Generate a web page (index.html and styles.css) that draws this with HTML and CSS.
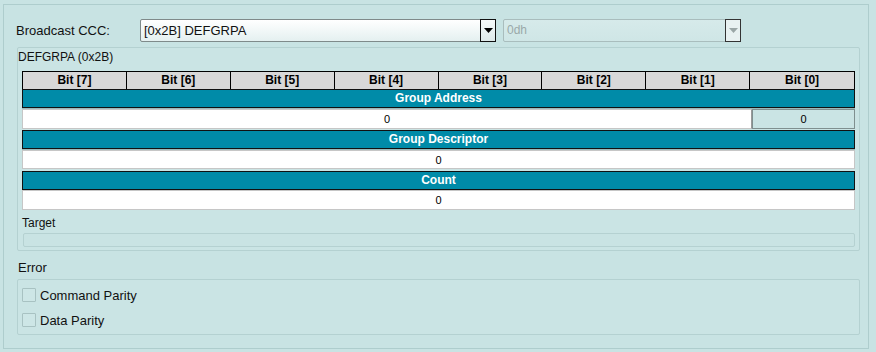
FILE: index.html
```html
<!DOCTYPE html>
<html>
<head>
<meta charset="utf-8">
<link rel="stylesheet" href="styles.css">
</head>
<body>
<div class="panel">
  <div class="toprow">
    <div class="lbl-main">Broadcast CCC:</div>
    <div class="combo combo-main">
      <span class="combo-text">[0x2B] DEFGRPA</span>
      <span class="combo-btn"><svg width="9" height="5" viewBox="0 0 9 5"><path d="M0 0H9L4.5 5Z" fill="#000"/></svg></span>
    </div>
    <div class="combo combo-dis">
      <span class="combo-text">0dh</span>
      <span class="combo-btn"><svg width="9" height="5" viewBox="0 0 9 5"><path d="M0 0H9L4.5 5Z" fill="#9aa6a6"/></svg></span>
    </div>
  </div>

  <div class="group group-reg">
    <div class="group-title">DEFGRPA (0x2B)</div>
    <div class="reg">
      <div class="row hdr">
        <div class="hcell">Bit [7]</div>
        <div class="hcell">Bit [6]</div>
        <div class="hcell">Bit [5]</div>
        <div class="hcell">Bit [4]</div>
        <div class="hcell">Bit [3]</div>
        <div class="hcell">Bit [2]</div>
        <div class="hcell">Bit [1]</div>
        <div class="hcell">Bit [0]</div>
      </div>
      <div class="row field r-ga">Group Address</div>
      <div class="row vals r-v1">
        <div class="vcell span7">0</div>
        <div class="vcell bit0">0</div>
      </div>
      <div class="row field r-gd">Group Descriptor</div>
      <div class="row vals r-v2">
        <div class="vcell span8">0</div>
      </div>
      <div class="row field r-cnt">Count</div>
      <div class="row vals r-v3">
        <div class="vcell span8">0</div>
      </div>
    </div>
    <div class="target-lbl">Target</div>
    <div class="target-bar"></div>
  </div>

  <div class="err-lbl">Error</div>
  <div class="group group-err">
    <label class="chk-row"><span class="chk"></span><span class="chk-text">Command Parity</span></label>
    <label class="chk-row"><span class="chk"></span><span class="chk-text">Data Parity</span></label>
  </div>
</div>
</body>
</html>
```

FILE: styles.css
```css
* { box-sizing: border-box; }
html, body { margin: 0; padding: 0; }
body {
  width: 876px;
  height: 352px;
  background: #c8e3e3;
  font-family: "Liberation Sans", Arial, sans-serif;
  color: #111;
  overflow: hidden;
}
.panel {
  margin: 4px 0 0 3px;
  width: 866px;
  height: 345px;
  border: 1px solid #aecdcd;
  padding: 14px 0 0 13px;
}
.toprow {
  display: flex;
  align-items: center;
  height: 23px;
}
.lbl-main {
  width: 124px;
  font-size: 13px;
  margin-left: -1px;
}
.combo {
  height: 23px;
  display: flex;
  align-items: stretch;
  border-radius: 2px;
}
.combo-main {
  width: 356px;
  border: 1px solid #7f8a8a;
  background: linear-gradient(#ffffff, #e4f0f0);
}
.combo-dis {
  width: 238px;
  margin-left: 7px;
  border: 1px solid #a9bdbd;
  background: linear-gradient(#d6eaea, #cfe6e6);
}
.combo-text {
  flex: 1;
  font-size: 13px;
  line-height: 21px;
  padding-left: 3px;
}
.combo-dis .combo-text { color: #9aa9a9; font-size: 12px; }
.combo-btn {
  width: 16px;
  margin: -1px -1px -1px 0;
  border: 1px solid #111;
  background: linear-gradient(#f6fafa, #dde9e9);
  display: flex;
  align-items: center;
  justify-content: center;
}
.combo-dis .combo-btn { border-color: #333; background: #e8f1f1; }

.group {
  width: 843px;
  border: 1px solid #b4d1d1;
  border-radius: 2px;
  background: #cae4e4;
}
.group-reg {
  margin-top: 5px;
  padding: 0 4px 3px 4px;
}
.group-title {
  height: 23px;
  line-height: 18px;
  font-size: 12px;
  margin-left: -4px;
}
.reg { width: 833px; }
.row { width: 833px; }
.hdr {
  display: grid;
  grid-template-columns: repeat(8, 1fr);
  height: 19px;
  border: 1px solid #000;
  background: #d8d8d8;
}
.hcell {
  font-size: 12px;
  font-weight: bold;
  text-align: center;
  line-height: 17px;
  border-right: 1px solid #000;
  color: #000;
}
.hcell:last-child { border-right: none; }
.field {
  background: #008ba8;
  border: 1px solid #111;
  color: #fff;
  font-weight: bold;
  font-size: 12px;
  text-align: center;
  box-shadow: 0 1px 0 #9bb;
  height: 19px;
  line-height: 17px;
}
.r-ga { margin-top: -1px; }
.r-gd { margin-top: 1px; }
.r-cnt { margin-top: 2px; }
.vals {
  display: flex;
  margin-top: 1px;
}
.r-v1 { height: 20px; }
.r-v2 { height: 19px; }
.r-v3 { height: 20px; margin-top: 0; }
.vcell {
  font-size: 11px;
  text-align: center;
  display: flex;
  align-items: center;
  justify-content: center;
  color: #000;
}
.span7 {
  width: 730px;
  background: #fff;
  border: 1px solid #c6c6c6;
  border-right-color: #9a9a9a;
}
.span8 {
  width: 833px;
  background: #fff;
  border: 1px solid #c6c6c6;
}
.bit0 {
  width: 103px;
  background: #cae4e4;
  border: 1px solid #7f8f8f;
}
.target-lbl {
  margin-top: 6px;
  font-size: 12px;
  line-height: 14px;
}
.target-bar {
  margin-top: 3px;
  margin-left: 1px;
  width: 832px;
  height: 14px;
  border: 1px solid #b5d1d1;
  border-radius: 2px;
  background: #c9e3e3;
}
.err-lbl {
  margin-top: 9px;
  font-size: 13px;
  line-height: 16px;
  margin-left: 1px;
}
.group-err {
  margin-top: 3px;
  height: 56px;
  padding: 3px 4px 0 4px;
}
.chk-row {
  display: flex;
  align-items: center;
  height: 24px;
  margin-bottom: 1px;
}
.chk {
  width: 14px;
  height: 14px;
  border: 1px solid #a8c2c2;
  background: #cde6e6;
  border-radius: 1px;
}
.chk-text {
  margin-left: 4px;
  font-size: 13px;
}
```
